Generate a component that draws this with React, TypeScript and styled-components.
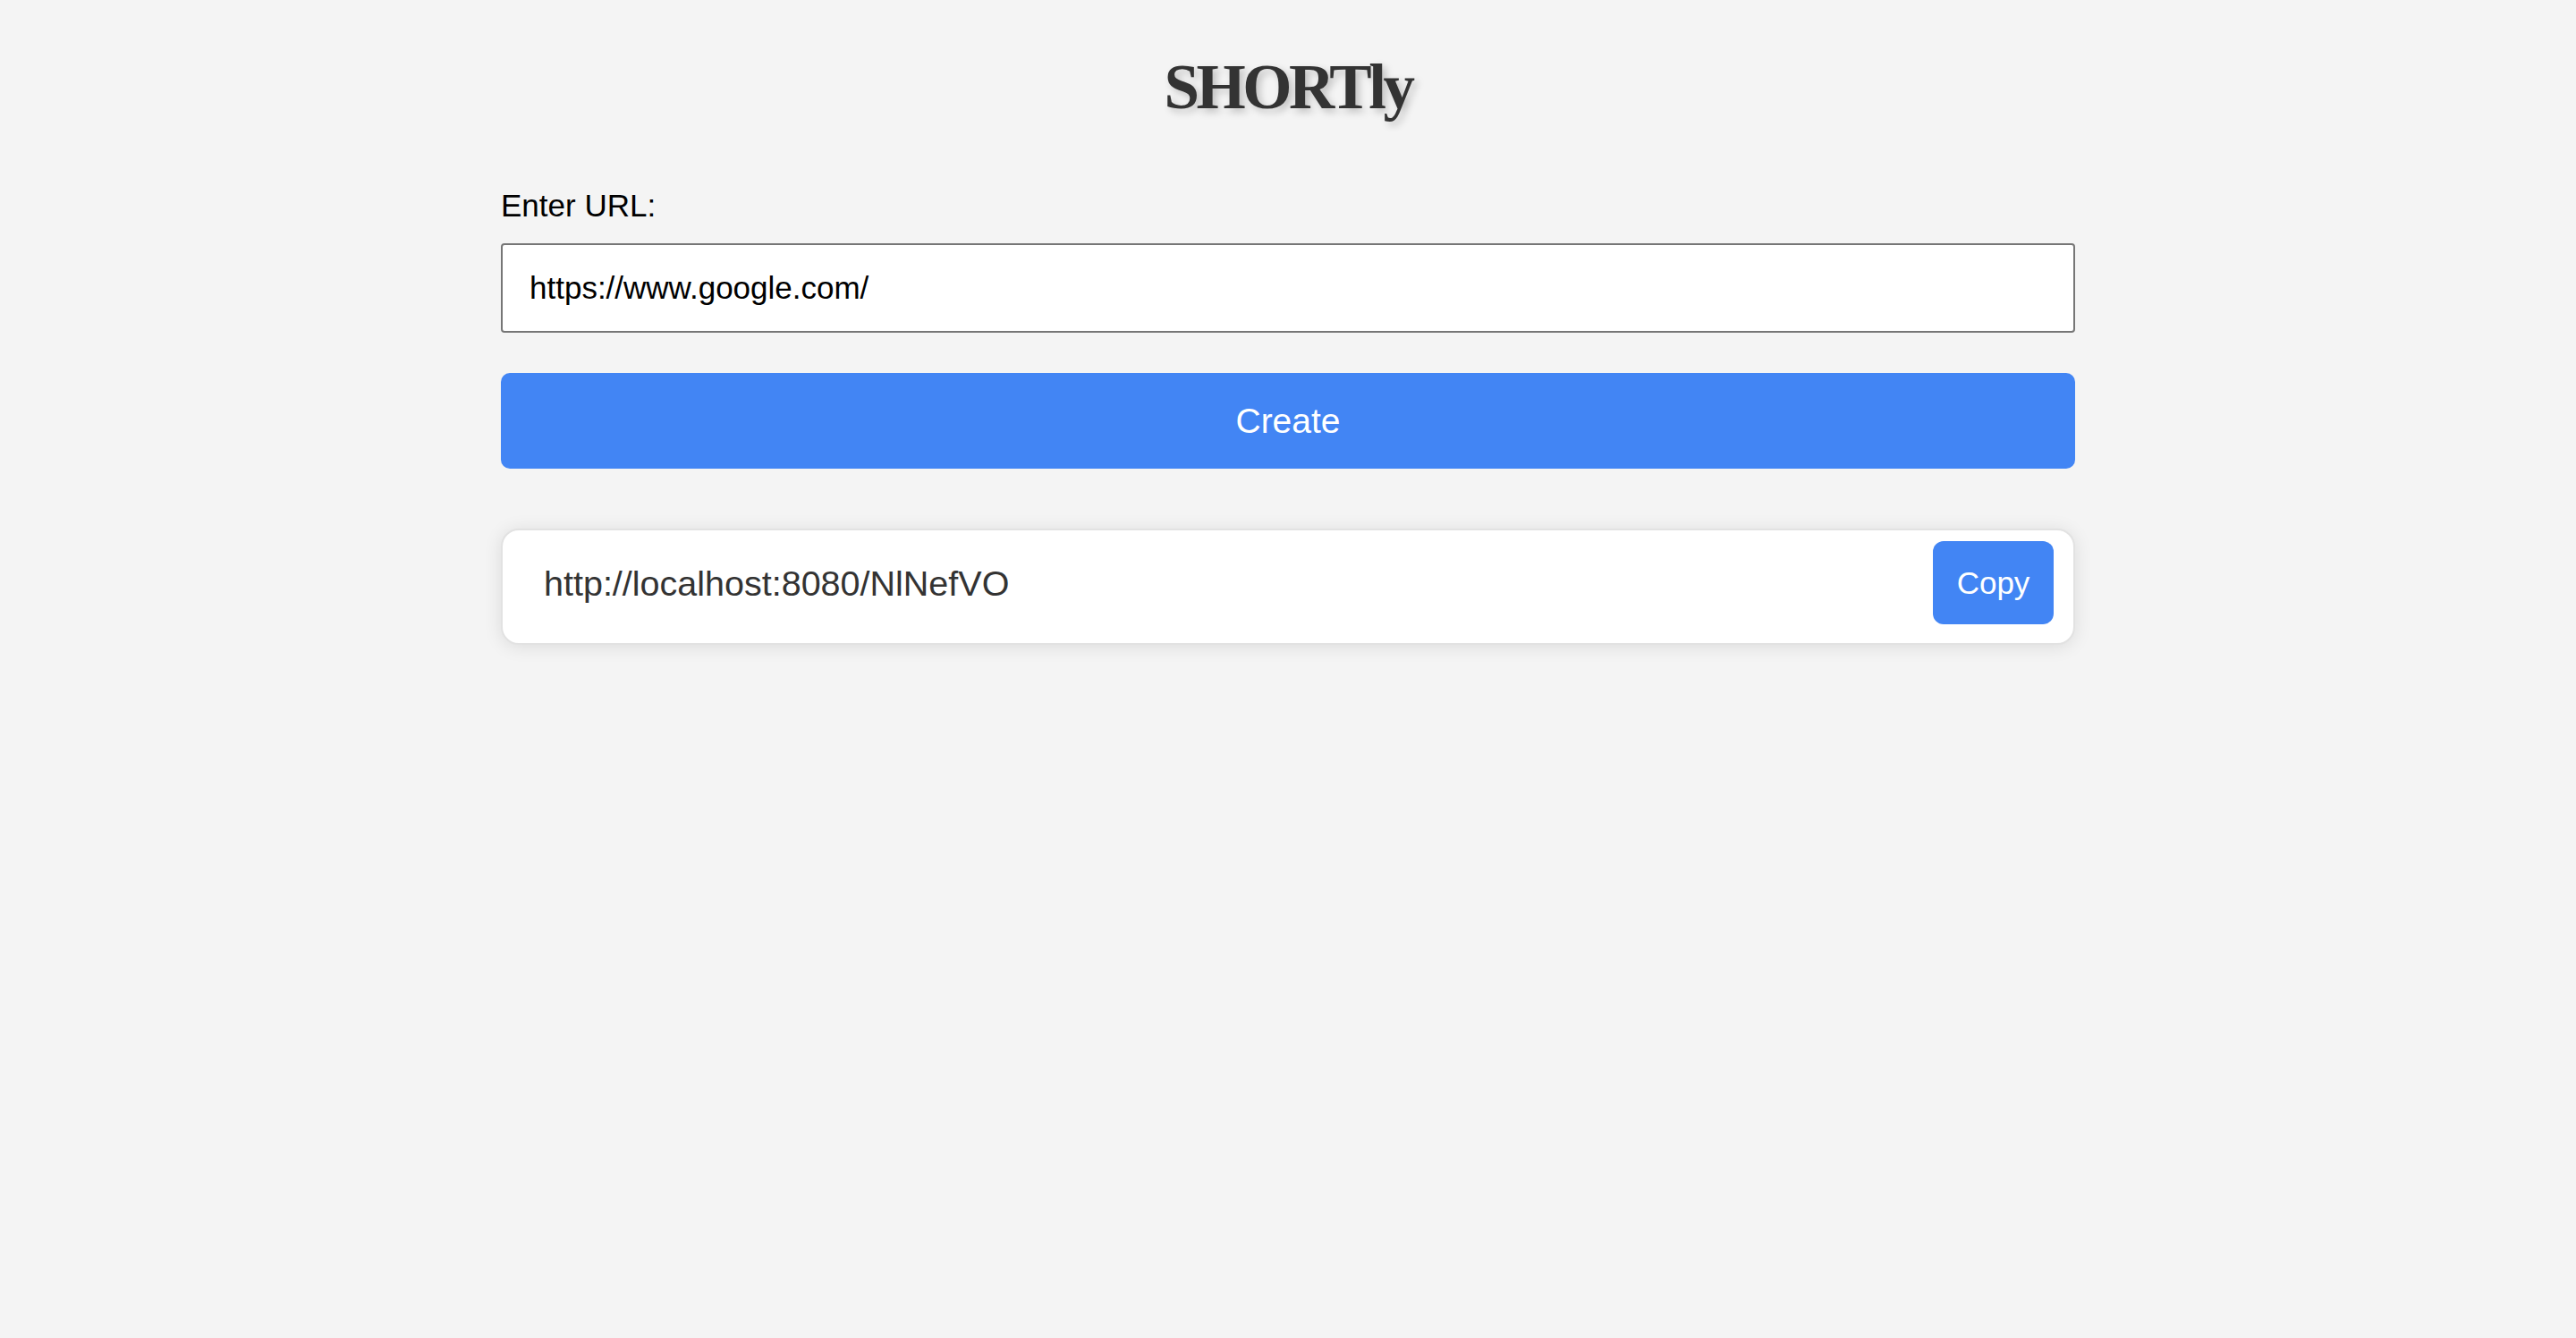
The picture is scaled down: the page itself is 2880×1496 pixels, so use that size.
import React, { useState } from "react";
import styled, { createGlobalStyle } from "styled-components";

const GlobalStyle = createGlobalStyle`
  html, body {
    margin: 0;
    padding: 0;
    background: #f4f4f4;
  }
  body {
    font-family: "Liberation Sans", Arial, sans-serif;
    min-height: 1496px;
  }
`;

const Page = styled.main`
  width: 1760px;
  margin: 0 auto;
  display: flex;
  flex-direction: column;
`;

const Title = styled.h1`
  margin: 53px 0 0;
  height: 88px;
  line-height: 88px;
  text-align: center;
  font-family: "Liberation Serif", "Times New Roman", serif;
  font-weight: 700;
  font-size: 71px;
  letter-spacing: -3.5px;
  color: #333333;
  text-shadow: 4px 4px 8px rgba(0, 0, 0, 0.22);
`;

const Form = styled.form`
  display: flex;
  flex-direction: column;
  margin-top: 69px;
`;

const Label = styled.label`
  font-size: 35px;
  line-height: 40px;
  color: #000;
  margin-bottom: 22px;
`;

const UrlInput = styled.input`
  box-sizing: border-box;
  height: 100px;
  width: 100%;
  border: 2px solid #767676;
  border-radius: 4px;
  background: #fff;
  padding: 0 30px;
  font-family: "Liberation Sans", Arial, sans-serif;
  font-size: 35px;
  color: #000;
  outline: none;
`;

const BlueButton = styled.button<{ $size: "large" | "small" }>`
  box-sizing: border-box;
  border: none;
  background: #4285f4;
  color: #fff;
  font-family: "Liberation Sans", Arial, sans-serif;
  cursor: pointer;
  padding: 0;
  ${(p) =>
    p.$size === "large"
      ? `
    width: 100%;
    height: 107px;
    margin-top: 45px;
    border-radius: 10px;
    font-size: 39px;
  `
      : `
    width: 135px;
    height: 93px;
    border-radius: 12px;
    font-size: 35px;
    flex-shrink: 0;
  `}
`;

const ResultCard = styled.section`
  box-sizing: border-box;
  margin-top: 67px;
  height: 130px;
  display: flex;
  align-items: center;
  justify-content: space-between;
  padding: 12px 22px 21px 46px;
  background: #fff;
  border: 2px solid #e2e2e2;
  border-radius: 20px;
  box-shadow: 0 2px 20px rgba(0, 0, 0, 0.1);
`;

const ShortUrl = styled.span`
  font-size: 39.5px;
  color: #333333;
  padding-top: 2px;
`;

export default function App() {
  const [url, setUrl] = useState("https://www.google.com/");
  return (
    <>
      <GlobalStyle />
      <Page>
        <Title>SHORTly</Title>
        <Form onSubmit={(e) => e.preventDefault()}>
          <Label htmlFor="url">Enter URL:</Label>
          <UrlInput id="url" value={url} onChange={(e) => setUrl(e.target.value)} />
          <BlueButton $size="large" type="submit">
            Create
          </BlueButton>
        </Form>
        <ResultCard>
          <ShortUrl>http://localhost:8080/NlNefVO</ShortUrl>
          <BlueButton $size="small" type="button">
            Copy
          </BlueButton>
        </ResultCard>
      </Page>
    </>
  );
}
